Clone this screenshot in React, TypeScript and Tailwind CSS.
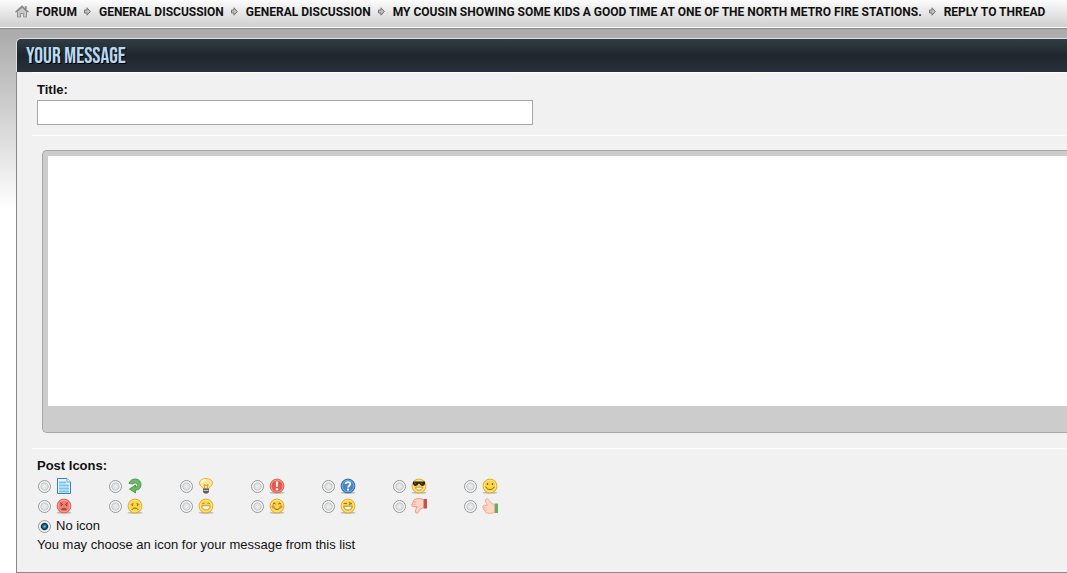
import { useState } from 'react';
import type { ReactNode } from 'react';

const crumbs = [
  'Forum',
  'General Discussion',
  'General Discussion',
  'My cousin showing some kids a good time at one of the North Metro fire stations.',
];

const radioClass =
  "m-0 h-[13px] w-[13px] shrink-0 appearance-none rounded-full border border-[#979898] bg-[radial-gradient(circle_at_center,#eceef0_0%,#dfe2e5_35%,#c3c6c9_48%,#f6f6f6_58%)] checked:bg-[radial-gradient(circle_at_center,#5fd0f5_0%,#1c5c85_25%,#0d2c47_40%,#c0c8ce_50%,#f6f6f6_58%)]";

function HomeIcon() {
  return (
    <svg viewBox="0 0 14 13" className="h-[13px] w-[14px]" aria-hidden="true">
      <path d="M9.8 1 H11.8 V4 H9.8 Z" fill="#999" />
      <path d="M2.5 6.5 L7 2.3 L11.5 6.5 V12 H8.6 V8.5 H5.4 V12 H2.5 Z" fill="#c8c8c8" stroke="#909090" />
      <path d="M0.5 7.3 L7 1.2 L13.5 7.3" fill="none" stroke="#858585" strokeWidth="1.3" />
    </svg>
  );
}

function CrumbArrow() {
  return (
    <svg viewBox="0 0 7 9" className="h-[9px] w-[7px]" aria-hidden="true">
      <path d="M0.5 3 H3 V0.8 L6.4 4.5 L3 8.2 V6 H0.5 Z" fill="#bdbdbd" stroke="#777" />
    </svg>
  );
}

function Face({ red = false, children }: { red?: boolean; children: ReactNode }) {
  return (
    <>
      <ellipse cx="8" cy="14.8" rx="7.5" ry="1" fill="#bbb" />
      <circle cx="8" cy="8" r="6.9" fill={red ? '#ee8172' : '#fbd548'} stroke={red ? '#dc5c4e' : '#e0a420'} />
      <circle cx="8" cy="8" r="5.9" fill="none" stroke={red ? '#f6aca2' : '#ffec98'} strokeWidth="0.8" />
      {children}
    </>
  );
}

const icons: { name: string; art: ReactNode }[] = [
  {
    name: 'Post',
    art: (
      <>
        <path d="M1.5 0.5 H11 L14.5 4 V15.5 H1.5 Z" fill="#e3f3ff" stroke="#3d7fc4" />
        <path d="M11 0.5 V4 H14.5" fill="#fff" stroke="#6ba2d8" />
        <path d="M3 4.5 H10 M3 7.5 H13 M3 10.5 H13 M3 13.5 H13" stroke="#7cc3f7" strokeWidth="1.8" />
      </>
    ),
  },
  {
    name: 'Arrow',
    art: (
      <path
        d="M2 5.5 C3 2.3 5.5 1 8.5 1 C12.2 1.2 14.2 4 14 7.3 C13.7 10.5 11.5 12 8.5 12.2 V15 L2.5 11 L8.5 7 V9 C10 8.8 10.7 8 10.5 6.7 C10.2 5 7.5 4.3 5.7 6 Z"
        fill="#6cb866"
        stroke="#3c8d41"
        strokeWidth="0.8"
      />
    ),
  },
  {
    name: 'Lightbulb',
    art: (
      <>
        <path d="M5.5 11 C5.5 9 1.5 8.5 1.5 5.2 C1.5 2 4.5 0.6 8 0.6 C11.5 0.6 14.5 2 14.5 5.2 C14.5 8.5 10.5 9 10.5 11 Z" fill="#ffe79b" stroke="#e8aa3b" />
        <path d="M3.5 5 C4 2.5 6 2 8 2.2" fill="none" stroke="#fffbe5" strokeWidth="1.8" />
        <path d="M6.7 10.5 L6 6.5 L8 7.5 L10 6.5 L9.3 10.5" fill="none" stroke="#dd9825" />
        <path d="M5 10.5 H11 V14 L9.5 15.5 H6.5 L5 14 Z" fill="#5d5d5d" />
        <path d="M5.5 12.5 H10.5" stroke="#c6c6c6" />
      </>
    ),
  },
  {
    name: 'Exclamation',
    art: (
      <Face red>
        <circle cx="8" cy="8" r="5.5" fill="#e6594e" />
        <path d="M6.9 3.5 H9.1 L8.7 9 H7.3 Z" fill="#fff" />
        <circle cx="8" cy="11.2" r="1.2" fill="#fff" />
      </Face>
    ),
  },
  {
    name: 'Question',
    art: (
      <>
        <ellipse cx="8" cy="14.8" rx="7.5" ry="1" fill="#bbb" />
        <circle cx="8" cy="8" r="6.9" fill="#4686c6" stroke="#2860a3" />
        <circle cx="8" cy="8" r="5.9" fill="none" stroke="#8cbce4" strokeWidth="0.8" />
        <path d="M5.7 6 C5.7 3.6 10.3 3.5 10.3 6 C10.3 7.6 8.1 7.5 8.1 9.5" fill="none" stroke="#fff" strokeWidth="1.8" />
        <circle cx="8" cy="11.7" r="1.1" fill="#fff" />
      </>
    ),
  },
  {
    name: 'Cool',
    art: (
      <Face>
        <path d="M2 3.5 H14 V6 C13.2 8.7 9.5 8.5 8.6 5.8 H7.4 C6.5 8.5 2.8 8.7 2 6 Z" fill="#292929" />
        <path d="M3.5 4.5 L5 6.3 M10 4.5 L11.5 6.3" stroke="#888" strokeWidth="0.7" />
        <path d="M4.5 9.2 H11.5 C11 13 5 13 4.5 9.2 Z" fill="#fff" stroke="#a87516" strokeWidth="0.7" />
      </Face>
    ),
  },
  {
    name: 'Smile',
    art: (
      <Face>
        <path d="M5.5 5 V7 M10.5 5 V7" stroke="#8a6110" strokeWidth="1.3" />
        <path d="M3.7 8.8 C5 12.4 11 12.4 12.3 8.8" fill="none" stroke="#8a6110" />
      </Face>
    ),
  },
  {
    name: 'Angry',
    art: (
      <Face red>
        <path d="M3.8 4.5 L6.9 6.7 M12.2 4.5 L9.1 6.7" stroke="#9d2f27" />
        <path d="M5.3 6.5 V8 M10.7 6.5 V8" stroke="#9d2f27" strokeWidth="1.2" />
        <path d="M5.5 11.8 C6 9.8 10 9.8 10.5 11.8 Z" fill="#b8473d" stroke="#9d2f27" strokeWidth="0.6" />
      </Face>
    ),
  },
  {
    name: 'Unhappy',
    art: (
      <Face>
        <path d="M3.8 6.5 L6.5 5.5 M12.2 6.5 L9.5 5.5" stroke="#936a12" strokeWidth="0.8" />
        <path d="M5.5 6.5 V8 M10.5 6.5 V8" stroke="#8a6110" strokeWidth="1.2" />
        <path d="M5 11.7 C6 9.5 10 9.5 11 11.7" fill="none" stroke="#8a6110" />
      </Face>
    ),
  },
  {
    name: 'Talking',
    art: (
      <Face>
        <path d="M4.2 6 C4.7 4.7 6 4.7 6.5 6 M9.5 6 C10 4.7 11.3 4.7 11.8 6" fill="none" stroke="#a2761b" strokeWidth="0.8" />
        <path d="M3.8 7.8 H12.2 C12 13.3 4 13.3 3.8 7.8 Z" fill="#fff" stroke="#bd851c" strokeWidth="0.8" />
      </Face>
    ),
  },
  {
    name: 'Red face',
    art: (
      <Face>
        <path d="M4.2 6.3 C4.7 4.7 6 4.7 6.5 6.3 M9.5 6.3 C10 4.7 11.3 4.7 11.8 6.3" fill="none" stroke="#71490e" />
        <circle cx="4" cy="8.7" r="1.6" fill="#f28b43" />
        <circle cx="12" cy="8.7" r="1.6" fill="#f28b43" />
        <path d="M5 9.6 C6 12 10 12 11 9.6" fill="none" stroke="#8a6110" />
      </Face>
    ),
  },
  {
    name: 'Wink',
    art: (
      <Face>
        <path d="M3.5 5.4 H7 M9 4.6 L11.8 5.6 L9 6.4" fill="none" stroke="#8a6110" strokeWidth="0.9" />
        <path d="M3.8 8.2 H12.2 C12 13.3 4 13.3 3.8 8.2 Z" fill="#fff" stroke="#a97516" strokeWidth="0.8" />
      </Face>
    ),
  },
  {
    name: 'Thumbs down',
    art: (
      <>
        <path d="M12.5 1 H16 V10.5 H12.5 Z" fill="#c4534b" />
        <path d="M12.5 1.5 C9 0.2 5 0.5 3.5 1.5 C2.5 2.2 2.8 3 2.3 3.7 C1.3 4.3 1.7 5.3 1.2 6 C0.4 7 0.8 8.6 2.2 8.7 H6 C5.2 11 4 12.7 4.5 14.3 C5.5 16 7.2 15 7.5 13.8 C8.4 11.5 10.5 10.5 12.5 9.3 Z" fill="#fcd7c5" stroke="#ec8c74" strokeWidth="0.9" />
        <path d="M2.5 3.8 H5 M1.6 6.2 H4.7" stroke="#ec8c74" strokeWidth="0.7" />
      </>
    ),
  },
  {
    name: 'Thumbs up',
    art: (
      <>
        <path d="M12.5 5.5 H16 V15 H12.5 Z" fill="#5eb356" />
        <path d="M12.5 14.5 C9 15.8 5 15.5 3.8 14.5 C2.8 13.8 3 13 2.5 12.3 C1.3 11.7 1.7 10.7 1.2 10 C0.4 9 0.8 7.4 2.2 7.3 H5.4 C4.5 5 2.8 3.3 3.5 1.7 C4.5 0 6.5 1 7.2 2.5 C8.4 5 10.5 5.5 12.5 6.7 Z" fill="#fcd7c5" stroke="#f0a38d" strokeWidth="0.9" />
        <path d="M2.7 12.2 H5 M1.6 9.8 H4.7" stroke="#f0a38d" strokeWidth="0.7" />
      </>
    ),
  },
];

export default function App() {
  const [icon, setIcon] = useState('none');

  return (
    <div className="min-h-screen overflow-x-hidden bg-white font-['Liberation_Sans',Arial,sans-serif] text-[13px] leading-[18px] text-[#111]">
      <nav
        aria-label="Breadcrumb"
        className="flex h-7 items-center border-b border-white bg-linear-to-b from-[#fcfcfc] to-[#cfcfcf] pb-1 pl-[15px]"
      >
        <ol className="flex items-center font-['Roboto',sans-serif] text-[12px] leading-4 font-bold whitespace-nowrap uppercase">
          {crumbs.map((crumb, i) => (
            <li key={i} className="flex items-center">
              <a href="#" className="flex items-center gap-[7px]">
                {i === 0 && <HomeIcon />}
                {crumb}
              </a>
              <span className="pr-2 pl-[7px]">
                <CrumbArrow />
              </span>
            </li>
          ))}
          <li aria-current="page">Reply to Thread</li>
        </ol>
      </nav>

      <main className="border-t border-[#8c8c8c] bg-linear-to-b from-[#aaa] to-white to-[180px] pt-[9px] pl-4">
        <form onSubmit={(e) => e.preventDefault()}>
          <h1 className="h-[34px] rounded-tl-[5px] border-t border-l border-[#dcdfe0] bg-linear-to-b from-[#303d45] via-[#1f262d] to-[#28313a] pl-[9px] font-['Bebas_Neue','Oswald','Roboto_Condensed','Open_Sans_Condensed','Roboto',sans-serif] text-[22px] leading-[35px] font-normal text-[#b8d9f2] uppercase [text-shadow:1px_1px_0_#000]">
            Your Message
          </h1>

          <div className="border-b border-l border-[#888] bg-[#f1f1f1] pb-[18px] pl-[15px]">
            <div className="border-t border-white px-[5px] pt-2 pb-[10px]">
              <label htmlFor="title" className="block leading-[18px] font-bold">
                Title:
              </label>
              <input
                id="title"
                type="text"
                className="mt-[1px] block h-[25px] w-[496px] max-w-full border border-[#a7a7a7] bg-white px-1 outline-none"
              />
            </div>

            <div className="border-t border-white pt-[14px] pb-[15px] pl-[10px]">
              <div className="rounded-l-[5px] border border-r-0 border-[#a7a7a7] bg-[#ccc] pt-[5px] pb-[26px] pl-[5px]">
                <textarea aria-label="Message" className="block h-[250px] w-full resize-none bg-white p-2 outline-none" />
              </div>
            </div>

            <fieldset className="border-t border-white pt-2 pl-[5px]">
              <legend className="float-left mb-[1px] w-full leading-[18px] font-bold">Post Icons:</legend>
              <div className="clear-both grid w-[497px] grid-cols-7">
                {icons.map(({ name, art }) => (
                  <label key={name} className="flex h-5 items-center gap-[5px] pl-[1px]">
                    <input
                      type="radio"
                      name="icon"
                      value={name}
                      checked={icon === name}
                      onChange={() => setIcon(name)}
                      className={radioClass}
                    />
                    <svg viewBox="0 0 16 16" className="h-4 w-4" role="img" aria-label={name}>
                      {art}
                    </svg>
                  </label>
                ))}
              </div>
              <label className="flex h-5 w-fit items-center gap-[5px] pl-[1px]">
                <input
                  type="radio"
                  name="icon"
                  value="none"
                  checked={icon === 'none'}
                  onChange={() => setIcon('none')}
                  className={radioClass}
                />
                No icon
              </label>
              <p className="leading-[18px]">You may choose an icon for your message from this list</p>
            </fieldset>
          </div>
        </form>
      </main>
    </div>
  );
}
